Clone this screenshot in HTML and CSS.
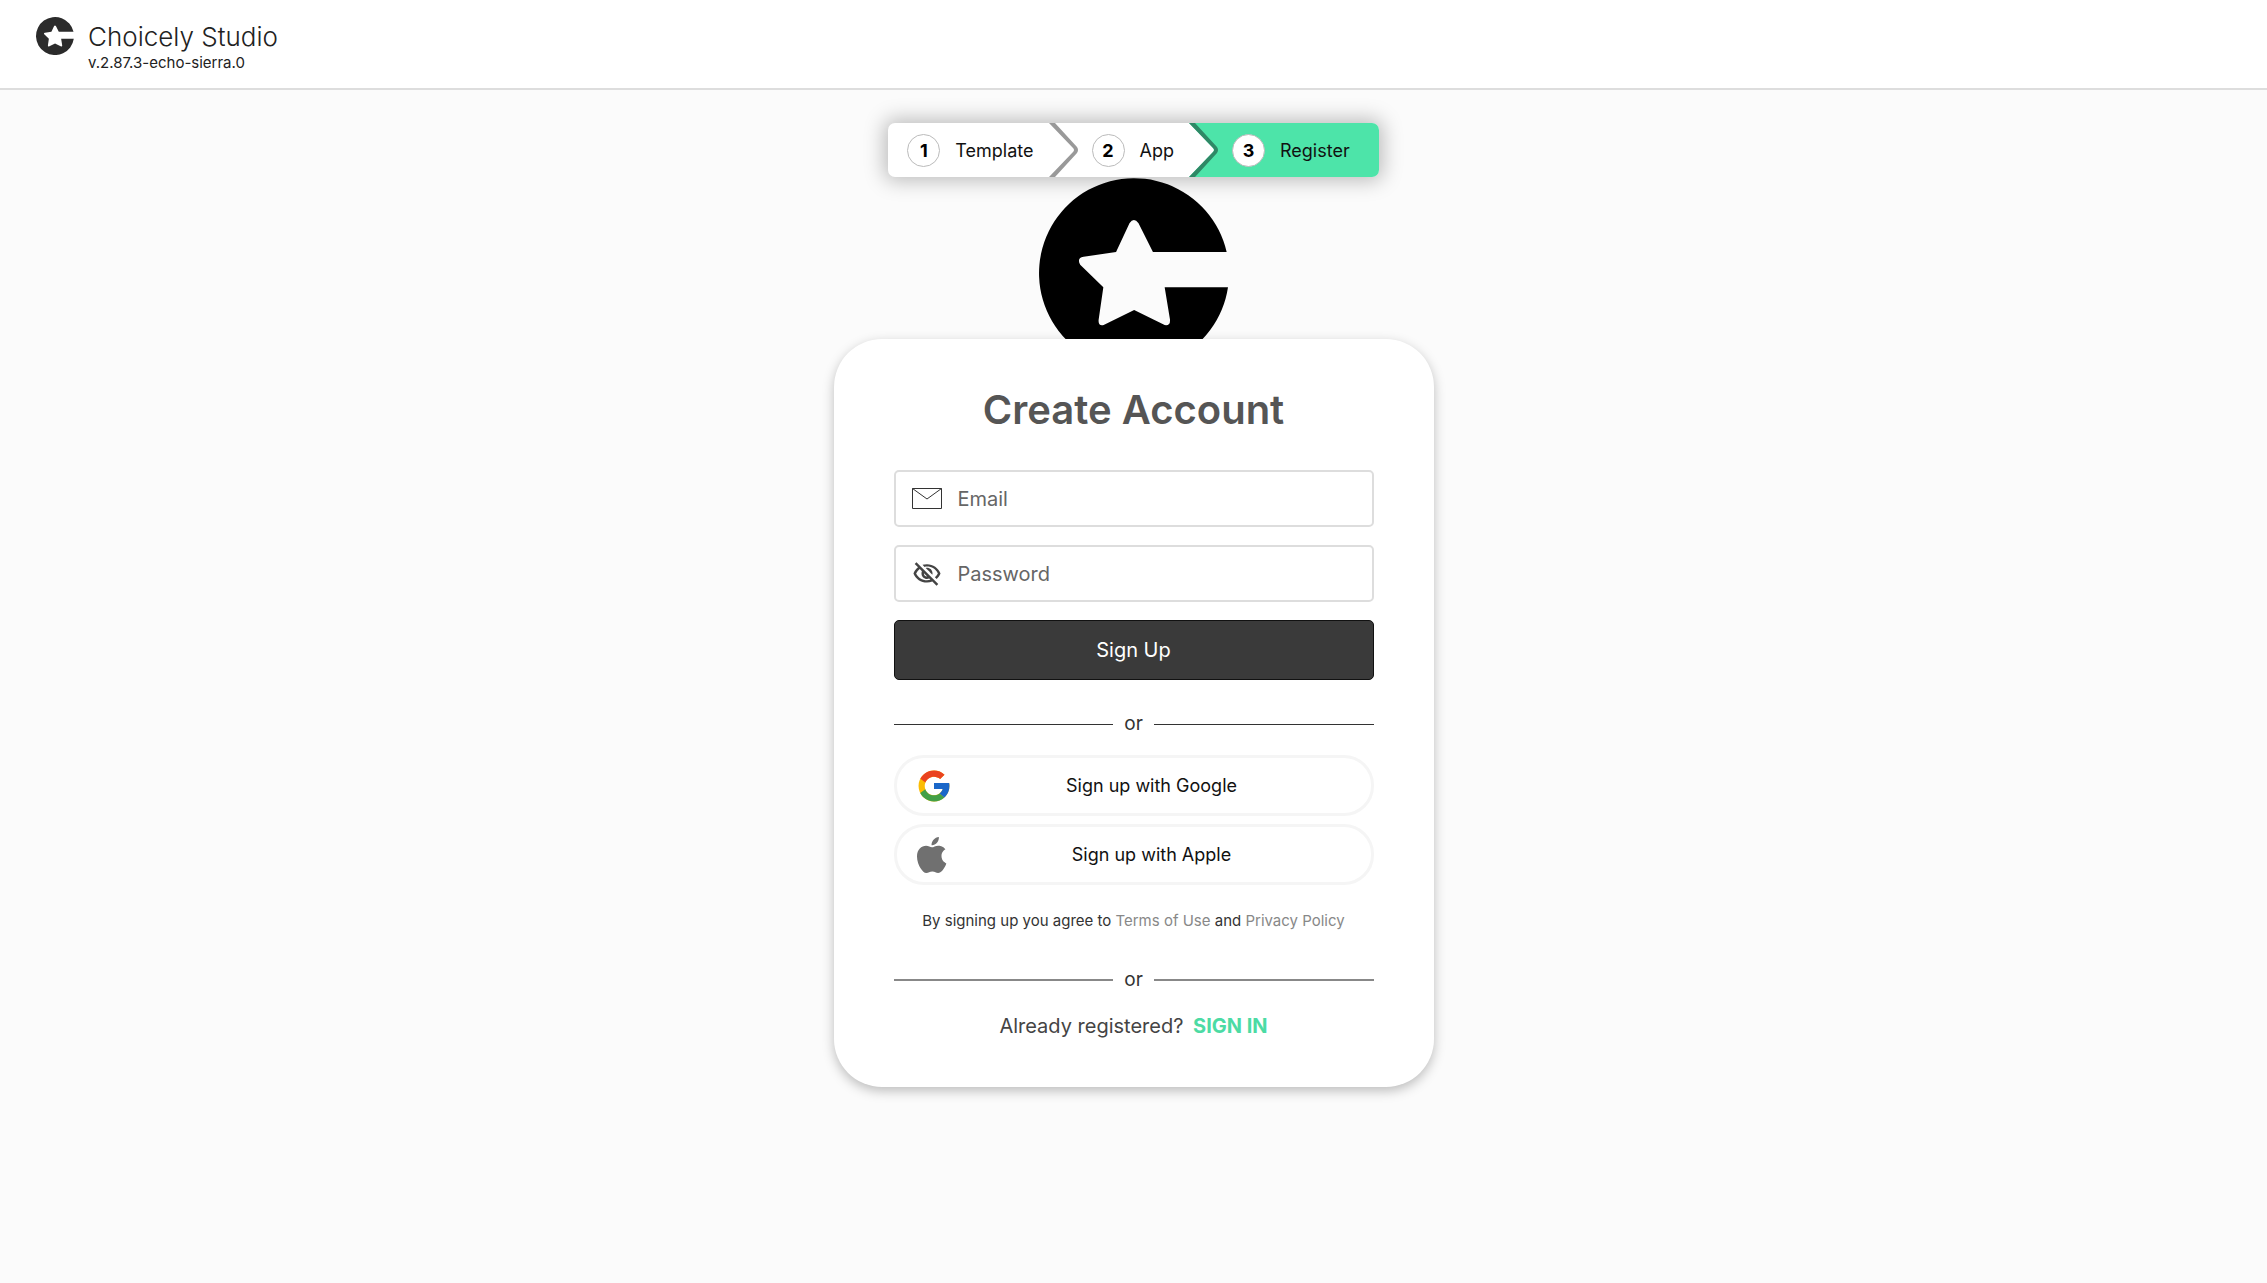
FILE: index.html
```html
<!DOCTYPE html>
<html lang="en">
<head>
    <meta charset="UTF-8">
    <meta name="viewport" content="width=device-width, initial-scale=1.0">
    <title>Choicely Studio</title>
    <link rel="stylesheet" href="styles.css">
</head>
<body>
    <svg class="defs" aria-hidden="true">
        <symbol id="logo" viewBox="117 55 567 567">
            <path d="M677 276A283.5 283.5 0 1 0 681 381H492L508 478Q509 497 492 494L401 449L310 494Q293 498 295 478L309 381L240 314Q229 293 250 290L347 276L387 190Q400 171 414 190L457 276Z"/>
        </symbol>
    </svg>

    <header class="header">
        <svg class="header-logo"><use href="#logo"/></svg>
        <div class="brand">
            <div class="brand-name">Choicely Studio</div>
            <div class="version">v.2.87.3-echo-sierra.0</div>
        </div>
    </header>

    <main class="main">
        <ol class="steps">
            <li class="step"><span class="number">1</span>Template</li>
            <li class="step">
                <svg class="arrow" viewBox="0 0 30 54"><path class="arrow-fill" d="M0 0L24 25Q26 27 24 29L0 54Z"/><path class="arrow-line" d="M0 0H6L28 24Q30 27 28 30L6 54H0L24 29Q26 27 24 25Z"/></svg>
                <span class="number">2</span>App
            </li>
            <li class="step active">
                <svg class="arrow" viewBox="0 0 30 54"><path class="arrow-fill" d="M0 0L24 25Q26 27 24 29L0 54Z"/><path class="arrow-line" d="M0 0H6L28 24Q30 27 28 30L6 54H0L24 29Q26 27 24 25Z"/></svg>
                <span class="number">3</span>Register
            </li>
        </ol>

        <svg class="big-logo"><use href="#logo"/></svg>

        <form class="card">
            <h1>Create Account</h1>
            <label class="field">
                <svg class="field-icon" viewBox="0 0 32 32" fill="none" stroke="#333"><path d="M1.500 5.500H30.500V25.500H1.500ZM1.500 5.500L16 16L30.500 5.500"/></svg>
                <input type="email" placeholder="Email" aria-label="Email">
            </label>
            <label class="field">
                <svg class="field-icon" viewBox="-1 -1 26 26" fill="#444"><path d="M12 6c3.790 0 7.170 2.130 8.820 5.500-.590 1.220-1.420 2.270-2.410 3.120l1.410 1.410c1.390-1.230 2.490-2.770 3.180-4.530C21.270 7.110 17 4 12 4c-1.270 0-2.490.2-3.640.57l1.650 1.650C10.660 6.090 11.320 6 12 6zm-1.070 1.140L13 9.210c.57.25 1.030.71 1.280 1.280l2.070 2.070c.08-.34.14-.7.140-1.070C16.500 9.010 14.480 7 12 7c-.37 0-.72.05-1.070.14zM2.010 3.870l2.680 2.680C3.060 7.830 1.770 9.530 1 11.500 2.730 15.890 7 19 12 19c1.520 0 2.980-.29 4.320-.82l3.420 3.420 1.410-1.410L3.420 2.450 2.010 3.870zm7.500 7.500l2.610 2.610c-.04.01-.08.02-.12.02-1.380 0-2.500-1.120-2.500-2.500 0-.05.01-.08.01-.13zm-3.400-3.400l1.750 1.750c-.23.55-.36 1.150-.36 1.780 0 2.480 2.020 4.500 4.500 4.500.63 0 1.230-.13 1.770-.36l.98.98c-.88.24-1.800.38-2.750.38-3.790 0-7.170-2.130-8.820-5.500.7-1.430 1.720-2.610 2.930-3.530z"/></svg>
                <input type="password" placeholder="Password" aria-label="Password">
            </label>
            <button class="submit" type="submit">Sign Up</button>

            <div class="divider">or</div>

            <button class="social" type="button">
                <svg class="google" viewBox="2 2 44 44">
                    <path fill="#fbbc05" d="M43.610 20.080H42V20H24v8h11.300c-1.650 4.660-6.080 8-11.300 8-6.630 0-12-5.370-12-12s5.370-12 12-12c3.060 0 5.840 1.150 7.960 3.040l5.660-5.660C34.050 6.050 29.270 4 24 4 12.950 4 4 12.950 4 24s8.950 20 20 20 20-8.950 20-20c0-1.340-.14-2.650-.39-3.920z"/>
                    <path fill="#ea4320" d="M6.310 14.690l6.570 4.820C14.650 15.110 18.960 12 24 12c3.060 0 5.840 1.150 7.960 3.040l5.660-5.660C34.050 6.050 29.270 4 24 4 16.320 4 9.660 8.340 6.310 14.690z"/>
                    <path fill="#43a047" d="M24 44c5.170 0 9.860-1.980 13.410-5.190l-6.190-5.240C29.210 35.090 26.720 36 24 36c-5.200 0-9.620-3.320-11.280-7.950l-6.520 5.030C9.500 39.560 16.230 44 24 44z"/>
                    <path fill="#1a67c9" d="M43.610 20.080H42V20H24v8h11.300c-.79 2.240-2.230 4.170-4.090 5.570l6.190 5.240C36.970 39.200 44 34 44 24c0-1.340-.14-2.650-.39-3.920z"/>
                </svg>
                <span>Sign up with Google</span>
            </button>
            <button class="social" type="button">
                <svg class="apple" viewBox="0 0 814 1000" preserveAspectRatio="xMinYMid"><path fill="#707070" d="M788 341c-6 4-108 62-108 190 0 149 130 201 134 202-1 4-21 72-69 142-42 62-87 123-155 123s-86-40-164-40c-77 0-104 41-166 41s-106-57-156-127C46 790 0 663 0 542c0-194 126-297 251-297 66 0 121 43 163 43 40 0 102-46 177-46 29 0 131 3 197 99zM555 159c31-37 53-88 53-139 0-7-1-14-2-20-51 2-111 34-147 76-29 32-55 84-55 135 0 8 1 16 2 18 3 1 8 1 14 1 45 0 102-30 135-71z"/></svg>
                <span>Sign up with Apple</span>
            </button>

            <p class="terms">By signing up you agree to <a href="#">Terms of Use</a> and <a href="#">Privacy Policy</a></p>

            <div class="divider divider-light">or</div>

            <p class="signin">Already registered? <a href="#">SIGN IN</a></p>
        </form>
    </main>
</body>
</html>
```
FILE: styles.css
```css
* {
    box-sizing: border-box;
}

body {
    margin: 0;
    min-height: 100vh;
    background: #fbfbfb;
    color: #333;
    font-family: Inter, "Liberation Sans", sans-serif;
}

.defs {
    position: absolute;
    width: 0;
    height: 0;
}

.header {
    display: flex;
    align-items: flex-start;
    gap: 14px;
    height: 90px;
    padding: 17px 36px;
    background: #fff;
    border-bottom: 2px solid #ddd;
}

.header-logo {
    width: 38px;
    height: 38px;
    fill: #2b2b2b;
}

.brand-name {
    color: #222;
    font-size: 26px;
    font-weight: 300;
    line-height: 40px;
}

.version {
    color: #222;
    font-size: 15px;
    line-height: 12px;
}

.main {
    display: flex;
    flex-direction: column;
    align-items: center;
    padding: 33px 16px;
}

.steps {
    display: flex;
    height: 54px;
    margin: 0;
    padding: 0;
    list-style: none;
    background: #fff;
    border-radius: 7px;
    box-shadow: 0 0 20px 4px rgba(0, 0, 0, 0.25);
}

.step {
    position: relative;
    display: flex;
    align-items: center;
    gap: 15px;
    padding: 0 15px 0 43px;
    color: #111;
    font-size: 18px;
}

.step:first-child {
    padding-left: 19px;
}

.step.active {
    padding-right: 29px;
    background: #4de4a9;
    border-radius: 0 7px 7px 0;
}

.arrow {
    position: absolute;
    top: 0;
    left: 0;
    width: 30px;
    height: 54px;
}

.arrow-fill {
    fill: #fff;
}

.arrow-line {
    fill: #999;
}

.active .arrow-line {
    fill: #2f8866;
}

.number {
    display: flex;
    align-items: center;
    justify-content: center;
    width: 33px;
    height: 33px;
    background: #fff;
    border: 1px solid #bbb;
    border-radius: 50%;
    color: #000;
    font-weight: 700;
}

.big-logo {
    width: 190px;
    height: 190px;
    margin-top: 1px;
    margin-bottom: -29px;
}

.card {
    position: relative;
    display: flex;
    flex-direction: column;
    width: 100%;
    max-width: 600px;
    padding: 41px 60px 46px;
    background: #fff;
    border-radius: 48px;
    box-shadow: 0 4px 12px rgba(0, 0, 0, 0.25);
}

h1 {
    margin: 0 0 30px;
    color: #555;
    font-size: 40px;
    font-weight: 600;
    line-height: 60px;
    text-align: center;
}

.field {
    display: flex;
    align-items: center;
    gap: 15px;
    height: 57px;
    margin-bottom: 18px;
    padding: 0 15px;
    border: 2px solid #ddd;
    border-radius: 5px;
}

.field-icon {
    flex: none;
    width: 32px;
    height: 32px;
}

.field input {
    flex: 1;
    min-width: 0;
    padding: 0;
    border: none;
    outline: none;
    background: none;
    font: inherit;
    font-size: 20px;
}

.field input::placeholder {
    color: #666;
}

button {
    font-family: inherit;
    cursor: pointer;
}

.submit {
    height: 60px;
    background: #3a3a3a;
    border: 1px solid #111;
    border-radius: 5px;
    color: #fff;
    font-size: 20px;
}

.divider {
    display: flex;
    align-items: center;
    gap: 11px;
    margin: 29px 0 16px;
    font-size: 19px;
    line-height: 30px;
}

.divider::before,
.divider::after {
    content: "";
    flex: 1;
    height: 1px;
    background: #333;
}

.divider-light::before,
.divider-light::after {
    height: 2px;
    background: #888;
}

.social {
    display: flex;
    align-items: center;
    height: 61px;
    margin-bottom: 8px;
    padding: 0 18px 0 20px;
    background: #fff;
    border: 3px solid #f5f5f5;
    border-radius: 30px;
    color: #111;
    font-size: 18px;
}

.social span {
    flex: 1;
}

.google,
.apple {
    width: 34px;
    height: 36px;
}

.terms {
    margin: 16px 0 32px;
    font-size: 15px;
    line-height: 24px;
    text-align: center;
}

.terms a {
    color: #888;
    text-decoration: none;
}

.divider-light {
    margin: 0 0 16px;
}

.signin {
    margin: 0;
    color: #444;
    font-size: 20px;
    line-height: 30px;
    text-align: center;
}

.signin a {
    margin-left: 4px;
    color: #4cdba4;
    font-weight: 700;
    text-decoration: none;
}
```
